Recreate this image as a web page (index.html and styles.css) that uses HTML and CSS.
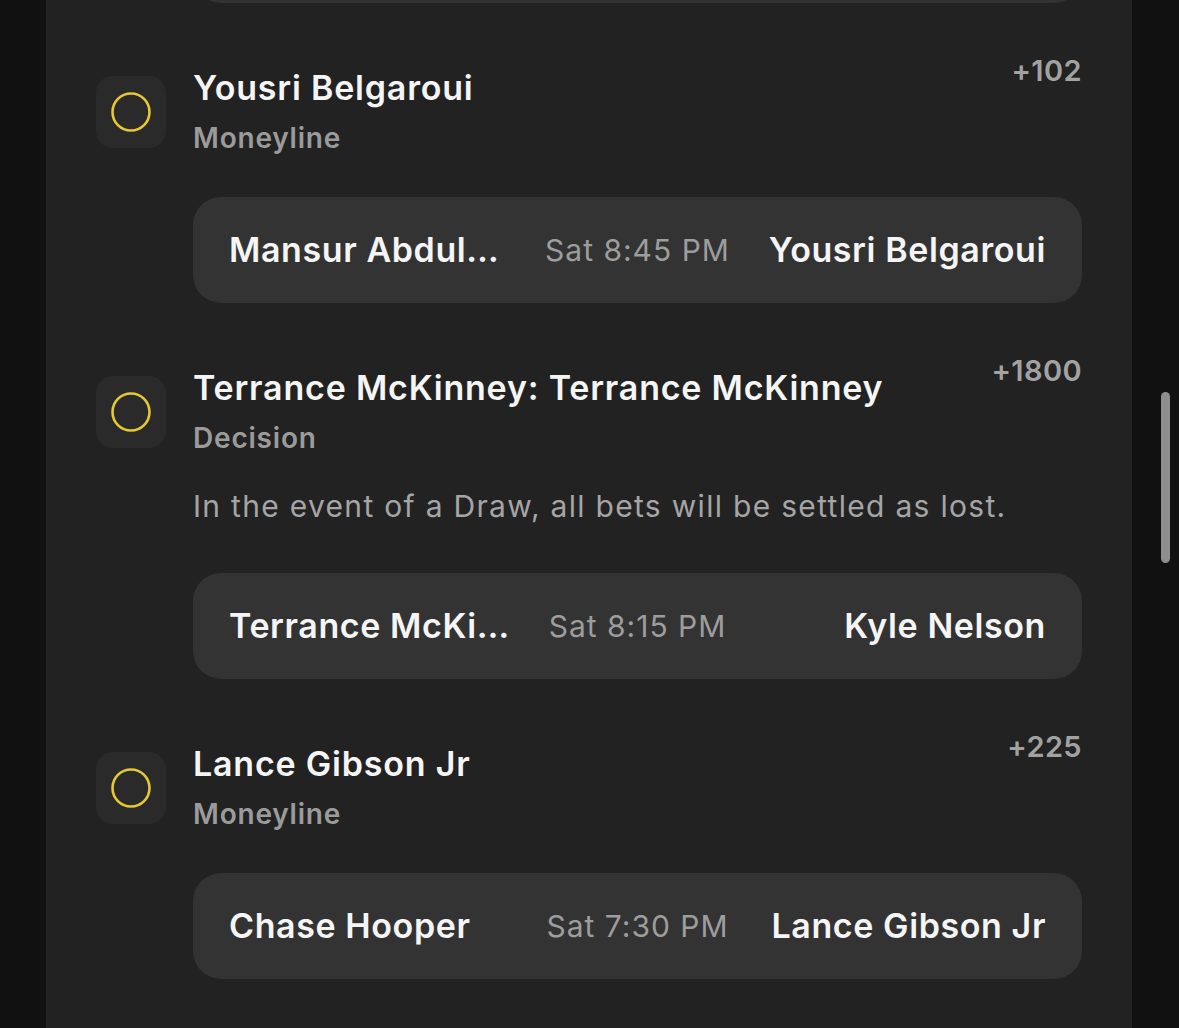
FILE: index.html
```html
<!DOCTYPE html>
<html lang="en">
<head>
<meta charset="utf-8">
<title>Bets</title>
<link rel="stylesheet" href="styles.css">
</head>
<body>
<div class="screen">
  <div class="gutter-left"></div>
  <main class="panel">
    <div class="match match-prev"><span class="team left">&nbsp;</span><span class="time">&nbsp;</span><span class="team right">&nbsp;</span></div>

    <section class="item">
      <div class="icon"><svg width="42" height="42" viewBox="0 0 42 42"><circle cx="21" cy="21" r="18.5" fill="none" stroke="#e6c833" stroke-width="2.6"/></svg></div>
      <div class="content">
        <div class="head">
          <div class="titles">
            <div class="title">Yousri Belgaroui</div>
            <div class="market">Moneyline</div>
          </div>
          <div class="odds">+102</div>
        </div>
        <div class="match">
          <span class="team left">Mansur Abdul-Malik</span>
          <span class="time">Sat 8:45 PM</span>
          <span class="team right">Yousri Belgaroui</span>
        </div>
      </div>
    </section>

    <section class="item">
      <div class="icon"><svg width="42" height="42" viewBox="0 0 42 42"><circle cx="21" cy="21" r="18.5" fill="none" stroke="#e6c833" stroke-width="2.6"/></svg></div>
      <div class="content">
        <div class="head">
          <div class="titles">
            <div class="title">Terrance McKinney: Terrance McKinney</div>
            <div class="market">Decision</div>
          </div>
          <div class="odds">+1800</div>
        </div>
        <p class="desc">In the event of a Draw, all bets will be settled as lost.</p>
        <div class="match">
          <span class="team left">Terrance McKinney</span>
          <span class="time">Sat 8:15 PM</span>
          <span class="team right">Kyle Nelson</span>
        </div>
      </div>
    </section>

    <section class="item">
      <div class="icon"><svg width="42" height="42" viewBox="0 0 42 42"><circle cx="21" cy="21" r="18.5" fill="none" stroke="#e6c833" stroke-width="2.6"/></svg></div>
      <div class="content">
        <div class="head">
          <div class="titles">
            <div class="title">Lance Gibson Jr</div>
            <div class="market">Moneyline</div>
          </div>
          <div class="odds">+225</div>
        </div>
        <div class="match">
          <span class="team left">Chase Hooper</span>
          <span class="time">Sat 7:30 PM</span>
          <span class="team right">Lance Gibson Jr</span>
        </div>
      </div>
    </section>
  </main>
  <div class="gutter-right"><div class="scrollbar"></div></div>
</div>
</body>
</html>
```
FILE: styles.css
```css
* { box-sizing: border-box; }
html, body { margin: 0; padding: 0; }
body {
  background: #111111;
  font-family: Inter, "Noto Sans", "Liberation Sans", sans-serif;
  color: #f4f4f4;
  overflow: hidden;
}
.screen {
  display: flex;
  width: 1179px;
  height: 1028px;
  overflow: hidden;
}
.gutter-left { width: 46px; flex: none; background: #111111; }
.panel {
  width: 1086px;
  flex: none;
  background: #222222;
  padding: 0 50px 0 50px;
  overflow: hidden;
}
.gutter-right {
  flex: 1;
  background: #111111;
  padding: 392px 0 0 29px;
}
.scrollbar {
  width: 9px;
  height: 171px;
  border-radius: 5px;
  background: #8e8e8e;
}
.item {
  display: flex;
  align-items: flex-start;
  gap: 27px;
  margin-top: 51px;
}
.icon {
  width: 70px;
  height: 72px;
  flex: none;
  margin-top: 22px;
  background: #2a2a2a;
  border-radius: 17px;
  display: flex;
  align-items: center;
  justify-content: center;
}
.icon svg { display: block; }
.content { flex: 1; min-width: 0; }
.head {
  display: flex;
  justify-content: space-between;
  align-items: flex-start;
}
.title {
  margin-top: 14px;
  font-size: 34px;
  line-height: 40px;
  font-weight: 600;
  color: #f5f5f5;
  letter-spacing: 0.8px;
}
.market {
  margin-top: 12px;
  font-size: 28px;
  line-height: 36px;
  font-weight: 600;
  color: #9b9b9b;
  letter-spacing: 0.8px;
}
.odds {
  font-size: 29px;
  line-height: 34px;
  font-weight: 600;
  color: #a2a2a2;
  letter-spacing: 0.4px;
}
.desc {
  margin: 30px 0 47px 0;
  font-size: 30px;
  line-height: 40px;
  font-weight: 400;
  color: #a5a5a5;
  letter-spacing: 1.3px;
}
.match {
  margin-top: 41px;
  height: 106px;
  background: #333333;
  border-radius: 28px;
  padding: 0 36px;
  display: grid;
  grid-template-columns: 1fr auto 1fr;
  column-gap: 30px;
  align-items: center;
}
.match.match-prev {
  margin: -103px 0 0 97px;
}
.team {
  font-size: 34px;
  line-height: 40px;
  font-weight: 600;
  color: #f5f5f5;
  letter-spacing: 0.6px;
  white-space: nowrap;
  overflow: hidden;
  text-overflow: ellipsis;
}
.team.left { text-align: left; }
.team.right { text-align: right; }
.time {
  font-size: 30px;
  line-height: 40px;
  font-weight: 400;
  color: #9d9d9d;
  letter-spacing: 1px;
  white-space: nowrap;
}
```
